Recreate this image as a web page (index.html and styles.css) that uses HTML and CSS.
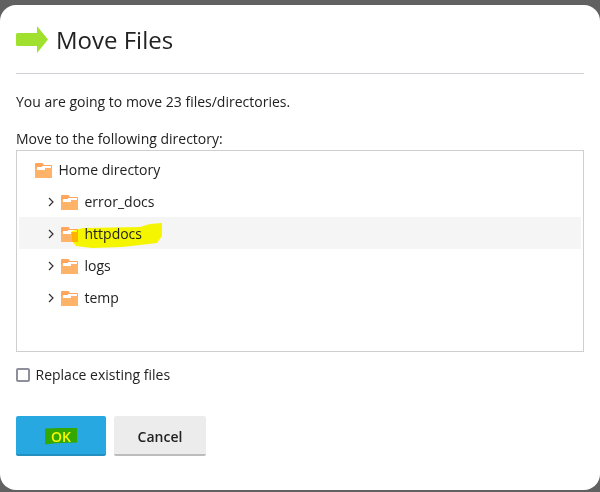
FILE: index.html
```html
<!DOCTYPE html>
<html lang="en">
<head>
    <meta charset="UTF-8">
    <title>Move Files</title>
    <link rel="stylesheet" href="styles.css">
</head>
<body>
    <div class="dialog">
        <div class="dialog-header">
            <svg class="header-icon" width="32" height="27" viewBox="0 0 32 27">
                <path d="M1.500 7H21V0L32 13.500 21 27V20H1.500A1.500 1.500 0 0 1 0 18.500V8.500A1.500 1.500 0 0 1 1.500 7z" fill="#a0e02f"/>
            </svg>
            <h1>Move Files</h1>
        </div>

        <p class="summary">You are going to move 23 files/directories.</p>

        <p class="field-label">Move to the following directory:</p>
        <div class="tree">
            <div class="tree-row tree-root">
                <svg class="folder" width="17" height="15" viewBox="0 0 17 15">
                    <path d="M0 1a1 1 0 0 1 1-1h6.500L9 2H16a1 1 0 0 1 1 1v11a1 1 0 0 1-1 1H1a1 1 0 0 1-1-1z" fill="#ffa55c"/>
                    <path d="M0 5H17V14a1 1 0 0 1-1 1H1a1 1 0 0 1-1-1z" fill="#ffb368"/>
                    <path d="M7 3H16V5H10V7H2V4H7z" fill="#fff"/>
                </svg>
                <span>Home directory</span>
            </div>
            <div class="tree-row">
                <svg class="chevron" width="8" height="10" viewBox="0 0 8 10"><path d="M2 1l4 4-4 4" fill="none" stroke="#333" stroke-width="1.200"/></svg>
                <svg class="folder" width="17" height="15" viewBox="0 0 17 15">
                    <path d="M0 1a1 1 0 0 1 1-1h6.500L9 2H16a1 1 0 0 1 1 1v11a1 1 0 0 1-1 1H1a1 1 0 0 1-1-1z" fill="#ffa55c"/>
                    <path d="M0 5H17V14a1 1 0 0 1-1 1H1a1 1 0 0 1-1-1z" fill="#ffb368"/>
                    <path d="M7 3H16V5H10V7H2V4H7z" fill="#fff"/>
                </svg>
                <span>error_docs</span>
            </div>
            <div class="tree-row tree-row-active">
                <svg class="chevron" width="8" height="10" viewBox="0 0 8 10"><path d="M2 1l4 4-4 4" fill="none" stroke="#333" stroke-width="1.200"/></svg>
                <svg class="folder" width="17" height="15" viewBox="0 0 17 15">
                    <path d="M0 1a1 1 0 0 1 1-1h6.500L9 2H16a1 1 0 0 1 1 1v11a1 1 0 0 1-1 1H1a1 1 0 0 1-1-1z" fill="#ffa55c"/>
                    <path d="M0 5H17V14a1 1 0 0 1-1 1H1a1 1 0 0 1-1-1z" fill="#ffb368"/>
                    <path d="M7 3H16V5H10V7H2V4H7z" fill="#fff"/>
                </svg>
                <span class="marked-name">httpdocs</span>
                <svg class="marker" width="90" height="25" viewBox="0 0 90 25">
                    <path d="M0 8L11 5 68 4 78 1 90 0V13L85 20 68 22 50 24 20 25 4 23 0 18z" fill="#ffff00"/>
                </svg>
            </div>
            <div class="tree-row">
                <svg class="chevron" width="8" height="10" viewBox="0 0 8 10"><path d="M2 1l4 4-4 4" fill="none" stroke="#333" stroke-width="1.200"/></svg>
                <svg class="folder" width="17" height="15" viewBox="0 0 17 15">
                    <path d="M0 1a1 1 0 0 1 1-1h6.500L9 2H16a1 1 0 0 1 1 1v11a1 1 0 0 1-1 1H1a1 1 0 0 1-1-1z" fill="#ffa55c"/>
                    <path d="M0 5H17V14a1 1 0 0 1-1 1H1a1 1 0 0 1-1-1z" fill="#ffb368"/>
                    <path d="M7 3H16V5H10V7H2V4H7z" fill="#fff"/>
                </svg>
                <span>logs</span>
            </div>
            <div class="tree-row">
                <svg class="chevron" width="8" height="10" viewBox="0 0 8 10"><path d="M2 1l4 4-4 4" fill="none" stroke="#333" stroke-width="1.200"/></svg>
                <svg class="folder" width="17" height="15" viewBox="0 0 17 15">
                    <path d="M0 1a1 1 0 0 1 1-1h6.500L9 2H16a1 1 0 0 1 1 1v11a1 1 0 0 1-1 1H1a1 1 0 0 1-1-1z" fill="#ffa55c"/>
                    <path d="M0 5H17V14a1 1 0 0 1-1 1H1a1 1 0 0 1-1-1z" fill="#ffb368"/>
                    <path d="M7 3H16V5H10V7H2V4H7z" fill="#fff"/>
                </svg>
                <span>temp</span>
            </div>
        </div>

        <label class="checkbox-row">
            <span class="checkbox"></span>
            <span>Replace existing files</span>
        </label>

        <div class="buttons">
            <button class="btn btn-primary"><span class="ok-mark">OK</span></button>
            <button class="btn btn-cancel">Cancel</button>
        </div>
    </div>
</body>
</html>
```

FILE: styles.css
```css
* {
    margin: 0;
    padding: 0;
    box-sizing: border-box;
}

body {
    font-family: 'Open Sans', 'DejaVu Sans', sans-serif;
    background: #616161;
    color: #222;
    height: 492px;
    overflow: hidden;
    padding-top: 5px;
    font-size: 14px;
}

.dialog {
    background: white;
    border-radius: 16px;
    height: 485px;
    padding: 0 16px;
}

.dialog-header {
    display: flex;
    align-items: center;
    gap: 8px;
    height: 69px;
    padding-top: 1px;
    border-bottom: 1px solid #cfcfd6;
}

h1 {
    font-size: 24px;
    font-weight: 400;
    line-height: 32px;
}

.summary {
    margin-top: 18px;
    line-height: 20px;
}

.field-label {
    margin-top: 17px;
    line-height: 20px;
}

.tree {
    margin-top: 1px;
    height: 202px;
    border: 1px solid #cfcfcf;
    padding: 2px 2px;
}

.tree-row {
    position: relative;
    display: flex;
    align-items: center;
    height: 32px;
    padding-left: 28px;
    padding-top: 2px;
    line-height: 20px;
}

.tree-root {
    padding-left: 16px;
}

.tree-row-active {
    background: #f5f5f5;
}

.chevron {
    margin-right: 6px;
}

.folder {
    margin-right: 6.500px;
}

.marked-name {
    position: relative;
    z-index: 1;
}

.marker {
    position: absolute;
    left: 53px;
    top: 6px;
    mix-blend-mode: multiply;
}

.checkbox-row {
    display: flex;
    align-items: center;
    gap: 5.500px;
    margin-top: 13px;
    line-height: 20px;
}

.checkbox {
    width: 14px;
    height: 14px;
    border: 2px solid #8f8f9c;
    border-radius: 2px;
}

.buttons {
    display: flex;
    gap: 8px;
    margin-top: 31px;
}

.btn {
    height: 40px;
    border: none;
    border-radius: 2px;
    padding-top: 2px;
    font-family: inherit;
    font-size: 14px;
    font-weight: 600;
}

.btn-primary {
    width: 90px;
    background: #28a8e0;
    border-bottom: 2px solid #2490bf;
    color: #f8f800;
}

.ok-mark {
    display: inline-block;
    background: #32a800;
    padding: 1px 6px;
    line-height: 15px;
    clip-path: polygon(0 6%, 100% 0, 100% 88%, 30% 92%, 0 100%);
}

.btn-cancel {
    width: 92px;
    background: #ececec;
    border-bottom: 2px solid #bdbdbd;
    color: #222;
}
```
